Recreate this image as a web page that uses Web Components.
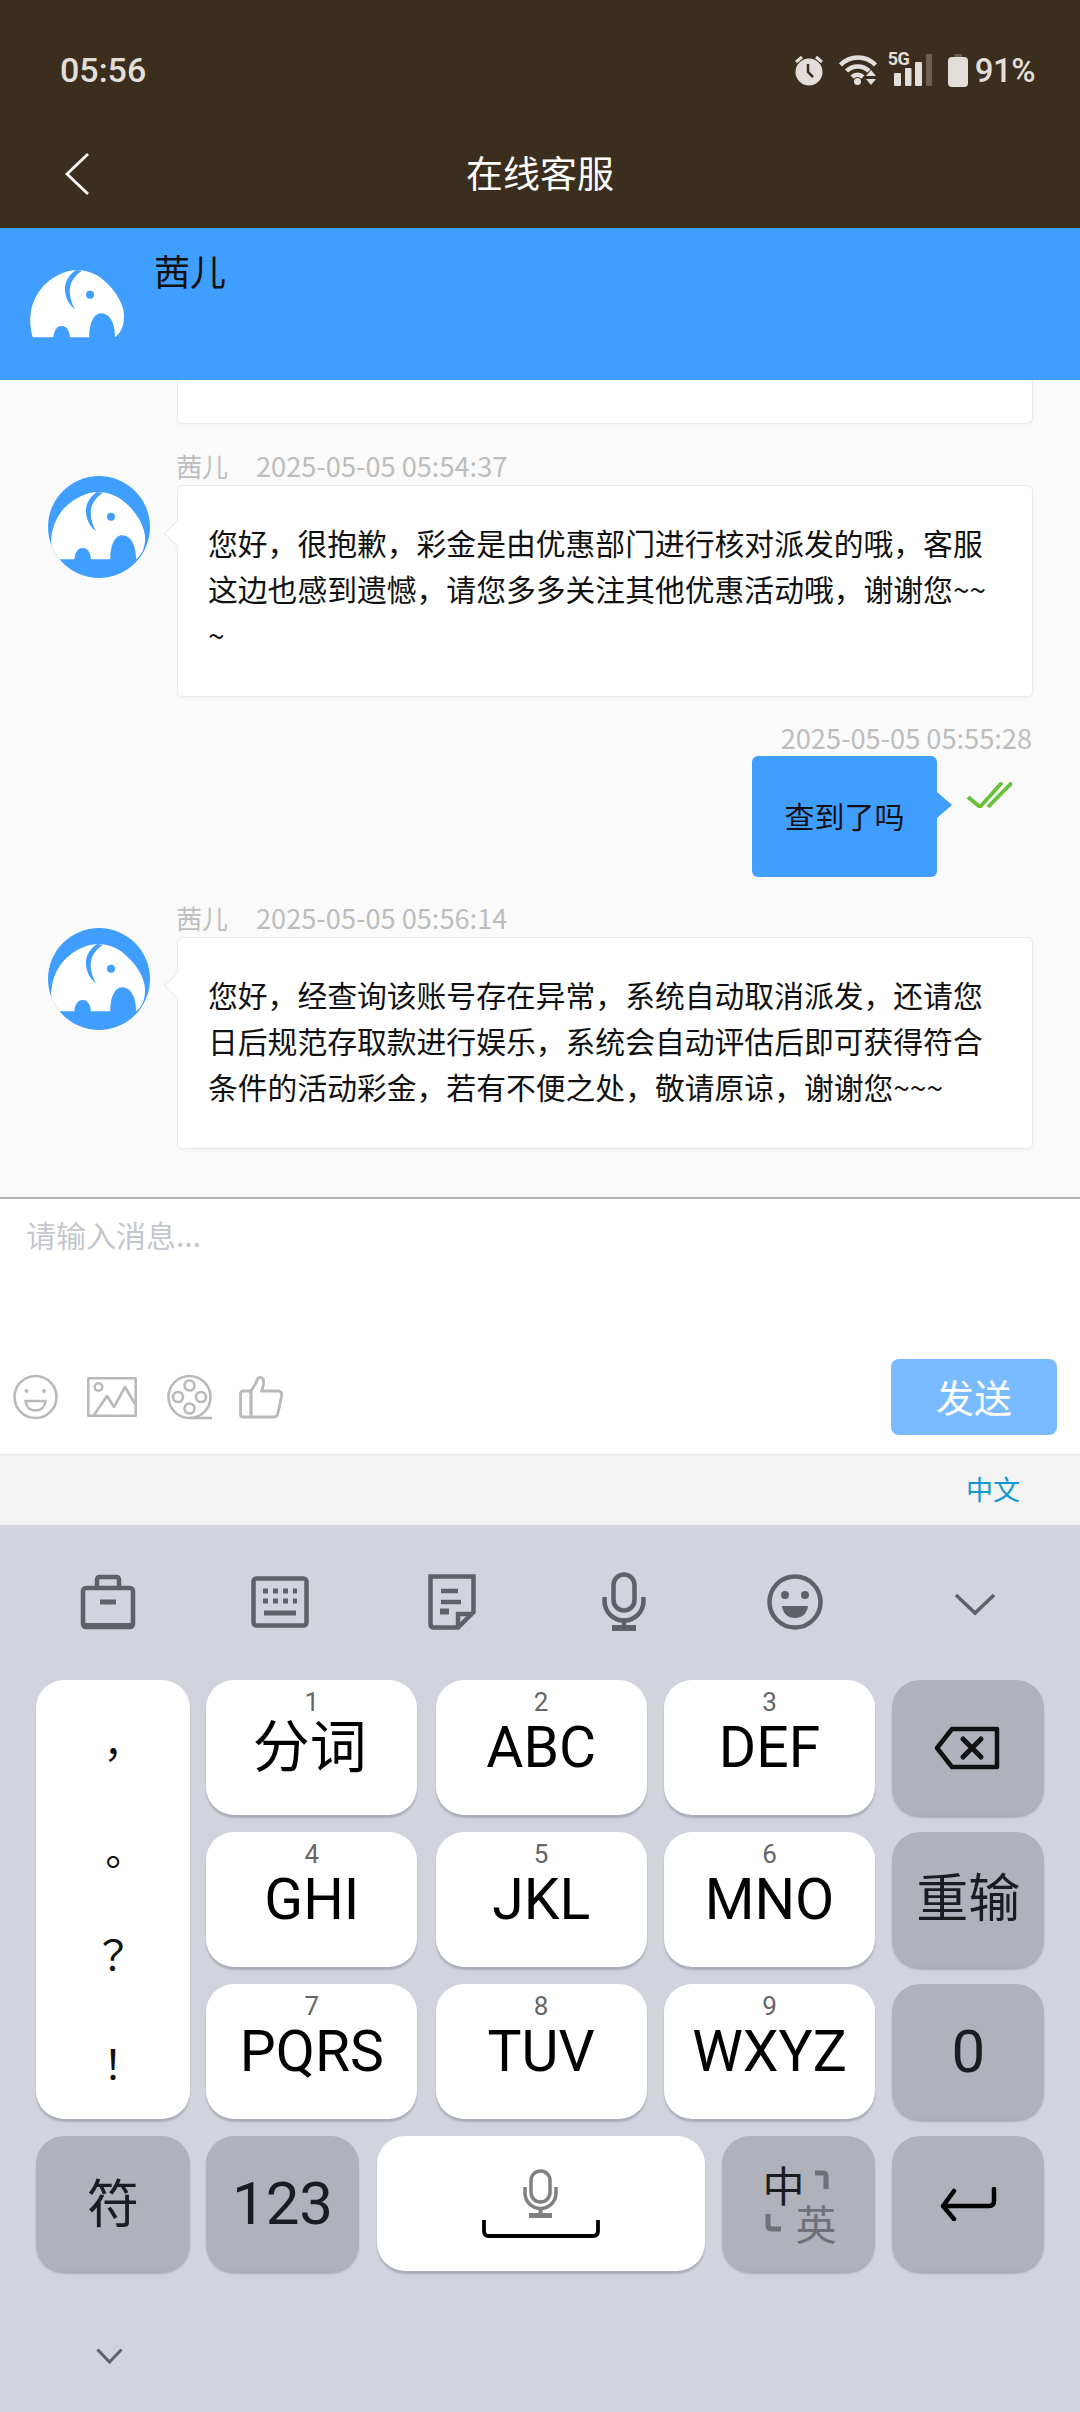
<!DOCTYPE html>
<html lang="zh-CN">
<head>
<meta charset="utf-8">
<title>在线客服</title>
<style>
  html, body { margin: 0; padding: 0; }
  body {
    width: 1080px;
    height: 2412px;
    overflow: hidden;
    background: #d1d4dd;
    font-family: "Noto Sans CJK SC", "Noto Sans", sans-serif;
  }
</style>
</head>
<body>
  <status-bar></status-bar>
  <app-header>在线客服</app-header>
  <agent-bar>茜儿</agent-bar>
  <chat-list>
    <chat-stub></chat-stub>
    <agent-message name="茜儿" time="2025-05-05 05:54:37">您好，很抱歉，彩金是由优惠部门进行核对派发的哦，客服这边也感到遗憾，请您多多关注其他优惠活动哦，谢谢您~~~</agent-message>
    <user-message time="2025-05-05 05:55:28">查到了吗</user-message>
    <agent-message style="margin-top:20px" name="茜儿" time="2025-05-05 05:56:14">您好，经查询该账号存在异常，系统自动取消派发，还请您日后规范存取款进行娱乐，系统会自动评估后即可获得符合条件的活动彩金，若有不便之处，敬请原谅，谢谢您~~~</agent-message>
  </chat-list>
  <chat-input></chat-input>
  <lang-bar>中文</lang-bar>
  <kb-toolbar></kb-toolbar>
  <kb-keys>
    <kb-punct></kb-punct>
    <kb-key digit="1" label="分词" style="margin:0 1px 0 -1px;padding-right:4px"></kb-key>
    <kb-key digit="2" label="ABC"></kb-key>
    <kb-key digit="3" label="DEF"></kb-key>
    <kb-key dark>
      <svg width="66" height="44" viewBox="0 0 66 44" fill="none" stroke="#111" stroke-width="4.5" stroke-linejoin="round" stroke-linecap="round" style="margin-left:-2px">
        <path d="M3 22 L18 3 H63 V41 H18 Z"/><path d="M29 13 L47 31 M47 13 L29 31" stroke-width="5"/>
      </svg>
    </kb-key>
    <kb-key digit="4" label="GHI" style="margin:0 1px 0 -1px"></kb-key>
    <kb-key digit="5" label="JKL"></kb-key>
    <kb-key digit="6" label="MNO"></kb-key>
    <kb-key dark label="重输" style="--fs:52px"></kb-key>
    <kb-key digit="7" label="PQRS" style="margin:0 1px 0 -1px"></kb-key>
    <kb-key digit="8" label="TUV"></kb-key>
    <kb-key digit="9" label="WXYZ"></kb-key>
    <kb-key dark label="0" style="--fs:60px"></kb-key>
  </kb-keys>
  <kb-bottom-row>
    <kb-key dark label="符" style="width:154px;--fs:52px;padding-top:4px"></kb-key>
    <kb-key dark label="123" style="width:153px;margin-left:-1px;--fs:60px"></kb-key>
    <kb-key style="width:328px;margin-left:1px">
      <svg width="118" height="70" viewBox="0 0 118 70" fill="none">
        <g stroke="#808080" stroke-width="3.5">
          <rect x="49" y="2" width="19" height="31" rx="9.5"/>
          <path d="M43 18 V24 A15.5 15.5 0 0 0 74 24 V18"/>
          <path d="M58.500 40 V46" stroke-width="4"/>
          <path d="M47 46.500 H70" stroke-width="5"/>
        </g>
        <path d="M2 51 V62 Q2 67 7 67 H111 Q116 67 116 62 V51" stroke="#000" stroke-width="3.800"/>
      </svg>
    </kb-key>
    <kb-key dark style="width:153px"><kb-lang-glyph></kb-lang-glyph></kb-key>
    <kb-key dark style="width:152px">
      <svg width="57" height="34" viewBox="0 0 57 34" fill="none" stroke="#000" stroke-width="4.500" stroke-linecap="round" stroke-linejoin="round">
        <path d="M54 2 V14 Q54 19 49 19 H4"/><path d="M14 4 L3 19 L14 32"/>
      </svg>
    </kb-key>
  </kb-bottom-row>
  <kb-hide></kb-hide>

<script>
// elephant mark, same drawing in the agent bar and in the avatars
const ELEPHANT = `
  <path fill="#fff" d="M38 262 C22 205 32 150 70 108 C100 78 135 62 168 60 C190 60 215 64 240 82 C285 115 320 170 311 215 C308 236 298 252 285 262 C286 225 272 190 243 190 C220 190 207 225 208 262 L150 262 C148 240 140 228 125 228 C110 228 102 242 100 262 Z"/>
  <path fill="#409eff" d="M168 60 C145 75 133 98 135 122 C137 148 150 165 165 178 C153 155 147 135 150 112 C153 92 168 74 186 62 Z"/>
  <circle fill="#409eff" cx="210" cy="134" r="12"/>`;

class StatusBar extends HTMLElement {
  constructor() {
    super();
    this.attachShadow({ mode: 'open' });
  }
  connectedCallback() {
    this.shadowRoot.innerHTML = `
      <style>
        :host {
          display: flex; align-items: center; justify-content: space-between;
          height: 140px; box-sizing: border-box; padding: 0 45px 0 60px;
          background: #3b2e1e; color: #e2dfda;
          font: 500 34px Roboto, sans-serif;
        }
        .icons { display: flex; align-items: center; }
        svg { display: block; }
        .signal { position: relative; width: 46px; height: 34px; margin: 0 15px 0 9px; }
        .signal span { position: absolute; left: 1px; top: -3px; font: 700 18px/18px Roboto, sans-serif; letter-spacing: -.5px; }
        .pct { margin-left: 7px; font-size: 33px; letter-spacing: -.5px; }
      </style>
      <span>05:56</span>
      <div class="icons">
        <svg width="30" height="32" viewBox="0 0 30 32" style="margin-right:15px">
          <circle cx="15" cy="18" r="13.500" fill="#e2dfda"/>
          <path d="M2 8 L8 3 M28 8 L22 3" stroke="#e2dfda" stroke-width="3"/>
          <path d="M14 10 V18 L19 23" fill="none" stroke="#3b2e1e" stroke-width="2.500"/>
        </svg>
        <svg width="39" height="32" viewBox="0 0 39 32" fill="none" stroke="#e2dfda" stroke-width="4.500">
          <path d="M1.500 11 A24 24 0 0 1 36.500 11"/>
          <path d="M7.500 17 A16 16 0 0 1 30 17"/>
          <path d="M13 23 A8 8 0 0 1 24 23"/>
          <circle cx="18.500" cy="27.500" r="3.500" fill="#e2dfda" stroke="none"/>
          <path d="M27 22 L32 16 L37 22 Z M27 25 H37 L32 31 Z" fill="#e2dfda" stroke="none"/>
        </svg>
        <div class="signal">
          <span>5G</span>
          <svg width="46" height="34" viewBox="0 0 46 34" fill="#e2dfda">
            <rect x="7" y="20" width="7" height="13" rx="1"/>
            <rect x="18" y="15" width="6.500" height="18" rx="1"/>
            <rect x="28" y="9" width="7" height="24" rx="1"/>
            <rect x="39" y="1" width="6" height="32" rx="1" fill="#6a5f50"/>
          </svg>
        </div>
        <svg width="20" height="33" viewBox="0 0 20 33" fill="#e2dfda">
          <rect x="6" y="0" width="8" height="5" rx="1.500" fill="#6a5f50"/>
          <rect x="0" y="3" width="20" height="30" rx="4"/>
        </svg>
        <span class="pct">91%</span>
      </div>`;
  }
}

class AppHeader extends HTMLElement {
  constructor() {
    super();
    this.attachShadow({ mode: 'open' });
  }
  connectedCallback() {
    this.shadowRoot.innerHTML = `
      <style>
        :host {
          display: flex; align-items: center; justify-content: center; position: relative;
          box-sizing: border-box; height: 88px; padding-bottom: 24px;
          background: #3b2e1e; color: #fff; font-size: 37px;
        }
        svg { position: absolute; left: 64px; top: 12px; }
      </style>
      <svg width="26" height="44" viewBox="0 0 26 44" fill="none" stroke="#fff" stroke-width="2.800"><path d="M24 2 L3 22 L24 42"/></svg>
      <slot></slot>`;
  }
}

class AgentBar extends HTMLElement {
  constructor() {
    super();
    this.attachShadow({ mode: 'open' });
  }
  connectedCallback() {
    this.shadowRoot.innerHTML = `
      <style>
        :host {
          display: flex; box-sizing: border-box; height: 152px; padding-left: 20px;
          background: #409eff; color: #111; font-size: 36px;
        }
        svg { width: 140px; height: 100px; margin-top: 22px; flex: none; display: block; }
        .name { margin: 19px 0 0 -6px; line-height: 46px; }
      </style>
      <svg viewBox="0 0 420 300">${ELEPHANT}</svg>
      <div class="name"><slot></slot></div>`;
  }
}

class ChatList extends HTMLElement {
  constructor() {
    super();
    this.attachShadow({ mode: 'open' });
  }
  connectedCallback() {
    this.shadowRoot.innerHTML = `
      <style>
        :host {
          display: block; box-sizing: border-box; height: 819px; overflow: hidden;
          background: #fafafa; border-bottom: 2px solid #b4b4b4;
        }
      </style>
      <slot></slot>`;
  }
}

class ChatStub extends HTMLElement {
  constructor() {
    super();
    this.attachShadow({ mode: 'open' });
  }
  connectedCallback() {
    this.shadowRoot.innerHTML = `
      <style>
        :host {
          display: block; box-sizing: border-box; height: 44px; margin: 0 47px 0 177px;
          background: #fff; border: 1px solid #e8eaee; border-top: 0;
          border-radius: 0 0 6px 6px; box-shadow: 0 2px 4px rgba(0,0,0,.03);
        }
      </style>`;
  }
}

class AgentMessage extends HTMLElement {
  constructor() {
    super();
    this.attachShadow({ mode: 'open' });
  }
  connectedCallback() {
    const name = this.getAttribute('name') || '';
    const time = this.getAttribute('time') || '';
    this.shadowRoot.innerHTML = `
      <style>
        :host { display: flex; margin: 21px 47px 0 48px; }
        .avatar { width: 102px; height: 102px; margin: 31px 27px 0 0; flex: none; border-radius: 50%; background: #409eff; overflow: hidden; }
        .avatar svg { display: block; width: 140px; height: 100px; margin: -4px 0 0 -7px; }
        .body { flex: 1; min-width: 0; }
        .meta { height: 40px; line-height: 40px; font-size: 26px; color: #bdbdbd; white-space: nowrap; margin-left: -1px; }
        .meta .t { margin-left: 28px; font-size: 27.200px; }
        .card {
          position: relative; box-sizing: border-box; padding: 33px 30px 39px 30px;
          background: #fff; border: 1px solid #e8eaee; border-radius: 6px;
          box-shadow: 0 2px 4px rgba(0,0,0,.03);
          font-size: 29.800px; line-height: 46px; color: #111; word-break: break-all;
        }
        .card::before {
          content: ""; position: absolute; left: -10px; top: 38px; width: 18px; height: 18px;
          background: #fff; border-left: 1px solid #e8eaee; border-bottom: 1px solid #e8eaee;
          transform: rotate(45deg);
        }
      </style>
      <div class="avatar"><svg viewBox="0 0 420 300">${ELEPHANT}</svg></div>
      <div class="body">
        <div class="meta"><span>${name}</span><span class="t">${time}</span></div>
        <div class="card"><slot></slot></div>
      </div>`;
  }
}

class UserMessage extends HTMLElement {
  constructor() {
    super();
    this.attachShadow({ mode: 'open' });
  }
  connectedCallback() {
    const time = this.getAttribute('time') || '';
    this.shadowRoot.innerHTML = `
      <style>
        :host { display: block; margin: 21px 48px 0 0; }
        .t { height: 38px; line-height: 38px; text-align: right; font-size: 27.200px; color: #bdbdbd; }
        .row { display: flex; justify-content: flex-end; }
        .bubble {
          position: relative; box-sizing: border-box; width: 185px; height: 121px; padding-bottom: 4px;
          display: flex; align-items: center; justify-content: center;
          background: #409eff; border-radius: 6px; color: #111; font-size: 30px;
        }
        .bubble::after {
          content: ""; position: absolute; right: -15px; top: 36px;
          border-left: 15px solid #409eff; border-top: 13px solid transparent; border-bottom: 13px solid transparent;
        }
        svg { display: block; margin: 26px 20px 0 30px; flex: none; }
      </style>
      <div class="t">${time}</div>
      <div class="row">
        <div class="bubble"><slot></slot></div>
        <svg width="45" height="26" viewBox="0 0 45 26" fill="none" stroke="#67c23a" stroke-width="3.800">
          <path d="M1 15 L13 25 L35 0.500"/><path d="M21 25 L45 0.500"/>
        </svg>
      </div>`;
  }
}

class ChatInput extends HTMLElement {
  constructor() {
    super();
    this.attachShadow({ mode: 'open' });
  }
  connectedCallback() {
    this.shadowRoot.innerHTML = `
      <style>
        :host {
          display: flex; flex-direction: column; box-sizing: border-box; height: 255px;
          padding: 14px 23px 19px 0; background: #fff;
        }
        .ph { padding-left: 26px; font-size: 30px; line-height: 42px; color: #c4c7cd; flex: 1; }
        .row { display: flex; align-items: flex-end; justify-content: space-between; }
        .tools { display: flex; align-items: center; gap: 29px; padding: 0 0 15px 13px; }
        svg { display: block; }
        .send {
          width: 166px; height: 76px; padding-bottom: 3px; box-sizing: border-box;
          border-radius: 8px; background: #79bbff; color: #fff;
          display: flex; align-items: center; justify-content: center; font-size: 38px;
        }
      </style>
      <div class="ph">请输入消息...</div>
      <div class="row">
        <div class="tools">
          <svg width="45" height="46" viewBox="0 0 45 46" fill="none" stroke="#b9b9b9" stroke-width="2.600">
            <circle cx="22.500" cy="23" r="21"/>
            <circle cx="13.500" cy="17" r="2" fill="#b9b9b9" stroke="none"/><circle cx="31" cy="17" r="2" fill="#b9b9b9" stroke="none"/>
            <path d="M12.500 27 H32.500 C32 33 28 36.500 22.500 36.500 C17 36.500 13 33 12.500 27 Z"/>
          </svg>
          <svg width="50" height="40" viewBox="0 0 50 40" fill="none" stroke="#b9b9b9" stroke-width="2.600" stroke-linejoin="round">
            <rect x="1.300" y="1.300" width="47.400" height="37.400"/>
            <circle cx="11.500" cy="10" r="3.800"/>
            <path d="M7 38 L20 19 L27 30 L38 10 L48 27"/>
          </svg>
          <svg width="46" height="46" viewBox="0 0 46 46" fill="none" stroke="#b9b9b9" stroke-width="2.600" style="margin-left:1px">
            <circle cx="22.500" cy="23" r="21"/>
            <circle cx="22.500" cy="11.500" r="5"/><circle cx="22.500" cy="34.500" r="5"/>
            <circle cx="11" cy="23" r="5"/><circle cx="34" cy="23" r="5"/>
            <path d="M22.500 44 H45"/>
          </svg>
          <svg width="44" height="44" viewBox="0 0 44 44" fill="none" stroke="#b9b9b9" stroke-width="2.800" stroke-linejoin="round" style="margin-left:-3px">
            <path d="M12 16 L17 8 C18 2 22 1 24 4 C26 8 24 12 22.500 16 H39 C42 16 43 18 42.500 21 L39 38 C38.500 41 36.500 42 34 42 H12 Z"/>
            <path d="M12 16 H4 C2.500 16 1.500 17 1.500 18.500 V39.500 C1.500 41 2.500 42 4 42 H12 Z"/>
          </svg>
        </div>
        <div class="send">发送</div>
      </div>`;
  }
}

class LangBar extends HTMLElement {
  constructor() {
    super();
    this.attachShadow({ mode: 'open' });
  }
  connectedCallback() {
    this.shadowRoot.innerHTML = `
      <style>
        :host {
          display: flex; align-items: center; justify-content: flex-end; box-sizing: border-box;
          height: 71px; padding: 0 60px 5px 0; background: #f3f3f3; border-top: 2px solid #ececec;
          color: #0e9ad0; font-size: 27px;
        }
      </style>
      <slot></slot>`;
  }
}

class KbToolbar extends HTMLElement {
  constructor() {
    super();
    this.attachShadow({ mode: 'open' });
  }
  connectedCallback() {
    this.shadowRoot.innerHTML = `
      <style>
        :host {
          display: grid; grid-template-columns: repeat(6, 172px); align-items: center; justify-items: center;
          box-sizing: border-box; height: 155px; padding: 0 0 1px 22px;
        }
        svg { display: block; fill: none; stroke: #5f6068; stroke-width: 4.500; }
      </style>
      <svg width="56" height="56" viewBox="0 0 56 56">
        <rect x="3" y="14" width="50" height="39" rx="3"/><path d="M17 14 V6 Q17 3 20 3 H36 Q39 3 39 6 V14"/>
        <path d="M20 28 H36" stroke-width="5"/><path d="M3 51 H53" stroke-width="4"/>
      </svg>
      <svg width="58" height="52" viewBox="0 0 58 52">
        <rect x="2.500" y="2.500" width="53" height="47" rx="3"/>
        <path d="M12 15 H17 M22 15 H27 M32 15 H37 M42 15 H46 M12 25 H17 M22 25 H27 M32 25 H37 M42 25 H46" stroke-width="5"/>
        <path d="M13 37 H45" stroke-width="5"/>
      </svg>
      <svg width="48" height="56" viewBox="0 0 48 56">
        <path d="M30 53.500 H6 Q2.500 53.500 2.500 50 V2.500 H45.500 V38 L30 53.500 Z"/>
        <path d="M30 53 V40 H45"/>
        <path d="M13 17 H30 M13 28 H33" stroke-width="4.500"/><path d="M12 37.500 H21" stroke-width="6"/>
      </svg>
      <svg width="44" height="60" viewBox="0 0 44 60">
        <rect x="11.500" y="2.500" width="21" height="36" rx="10.500"/>
        <path d="M2.500 25 V29 A19.500 19.500 0 0 0 41.500 29 V25"/><path d="M22 48 V54"/><path d="M10 56 H34" stroke-width="6"/>
      </svg>
      <svg width="56" height="56" viewBox="0 0 56 56" style="margin-left:-2px">
        <circle cx="28" cy="28" r="25.500"/>
        <circle cx="18" cy="21" r="4" fill="#5f6068" stroke="none"/><circle cx="38" cy="21" r="4" fill="#5f6068" stroke="none"/>
        <path d="M15 32 H41 C40 40 35 44 28 44 C21 44 16 40 15 32 Z" fill="#5f6068" stroke="none"/>
      </svg>
      <svg width="42" height="24" viewBox="0 0 42 24" style="margin:4px 0 0 14px"><path d="M2 3 L21 21 L40 3" stroke-width="3.500"/></svg>`;
  }
}

class KbKeys extends HTMLElement {
  constructor() {
    super();
    this.attachShadow({ mode: 'open' });
  }
  connectedCallback() {
    this.shadowRoot.innerHTML = `
      <style>
        :host {
          display: grid; box-sizing: border-box; margin: 0 36px;
          grid-template-columns: 154px 211px 211px 211px 152px;
          grid-auto-rows: 135px; column-gap: 17.330px; row-gap: 17px;
        }
      </style>
      <slot></slot>`;
  }
}

class KbKey extends HTMLElement {
  constructor() {
    super();
    this.attachShadow({ mode: 'open' });
  }
  connectedCallback() {
    const digit = this.getAttribute('digit');
    const label = this.getAttribute('label') || '';
    this.shadowRoot.innerHTML = `
      <style>
        :host {
          display: flex; align-items: center; justify-content: center; position: relative;
          box-sizing: border-box; border-radius: 28px; background: #fff;
          box-shadow: 0 3px 2px rgba(70,74,90,.28); color: #000;
          font: var(--fs, 57px) Roboto, "Noto Sans CJK SC", sans-serif;
        }
        :host([dark]) { background: #afb1bb; color: #1b1c20; }
        .d { position: absolute; left: 0; right: 0; top: 7px; text-align: center; font-size: 26px; line-height: 30px; color: #666; }
        .l { line-height: 64px; white-space: nowrap; }
      </style>
      ${digit ? `<span class="d">${digit}</span>` : ''}
      ${label ? `<span class="l">${label}</span>` : ''}
      <slot></slot>`;
  }
}

class KbPunct extends HTMLElement {
  constructor() {
    super();
    this.attachShadow({ mode: 'open' });
  }
  connectedCallback() {
    this.shadowRoot.innerHTML = `
      <style>
        :host {
          grid-row: span 3; display: flex; flex-direction: column; align-items: center;
          box-sizing: border-box; padding-top: 42px; border-radius: 28px; background: #fff;
          box-shadow: 0 3px 2px rgba(70,74,90,.28); color: #111;
          font: 40px/60px "Noto Sans CJK TC", sans-serif;
        }
        span:nth-of-type(2) { margin-top: 48px; }
        span:nth-of-type(3) { margin-top: 33px; }
        span:nth-of-type(4) { margin-top: 49px; }
      </style>
      <span>，</span><span>。</span><span>？</span><span>！</span>`;
  }
}

class KbBottomRow extends HTMLElement {
  constructor() {
    super();
    this.attachShadow({ mode: 'open' });
  }
  connectedCallback() {
    this.shadowRoot.innerHTML = `
      <style>
        :host { display: flex; gap: 17px; height: 135px; margin: 17px 36px 0; }
      </style>
      <slot></slot>`;
  }
}

class KbLangGlyph extends HTMLElement {
  constructor() {
    super();
    this.attachShadow({ mode: 'open' });
  }
  connectedCallback() {
    this.shadowRoot.innerHTML = `
      <style>
        :host {
          display: grid; grid-template-columns: 38px 38px; grid-template-rows: 36px 40px; margin-left: 4px;
          font-family: "Noto Sans CJK SC", sans-serif; line-height: 40px;
        }
        .zh { font-size: 42px; color: #1b1c20; margin-top: -2px; }
        .en { font-size: 41px; color: #6f7078; margin-left: -5px; }
        svg { display: block; }
      </style>
      <span class="zh">中</span>
      <svg width="38" height="36" viewBox="0 0 38 36" fill="none" stroke="#6f7078" stroke-width="5"><path d="M14 7 H22 Q25 7 25 10 V23"/></svg>
      <svg width="38" height="40" viewBox="0 0 38 40" fill="none" stroke="#6f7078" stroke-width="5"><path d="M5 12 V23 Q5 27 9 27 H18"/></svg>
      <span class="en">英</span>`;
  }
}

class KbHide extends HTMLElement {
  constructor() {
    super();
    this.attachShadow({ mode: 'open' });
  }
  connectedCallback() {
    this.shadowRoot.innerHTML = `
      <style>
        :host { display: block; padding: 77px 0 0 96px; }
        svg { display: block; }
      </style>
      <svg width="27" height="16" viewBox="0 0 27 16" fill="none" stroke="#5f6068" stroke-width="3"><path d="M1.500 1.500 L13.500 14 L25.500 1.500"/></svg>`;
  }
}

customElements.define('status-bar', StatusBar);
customElements.define('app-header', AppHeader);
customElements.define('agent-bar', AgentBar);
customElements.define('chat-list', ChatList);
customElements.define('chat-stub', ChatStub);
customElements.define('agent-message', AgentMessage);
customElements.define('user-message', UserMessage);
customElements.define('chat-input', ChatInput);
customElements.define('lang-bar', LangBar);
customElements.define('kb-toolbar', KbToolbar);
customElements.define('kb-keys', KbKeys);
customElements.define('kb-key', KbKey);
customElements.define('kb-punct', KbPunct);
customElements.define('kb-bottom-row', KbBottomRow);
customElements.define('kb-lang-glyph', KbLangGlyph);
customElements.define('kb-hide', KbHide);
</script>
</body>
</html>
